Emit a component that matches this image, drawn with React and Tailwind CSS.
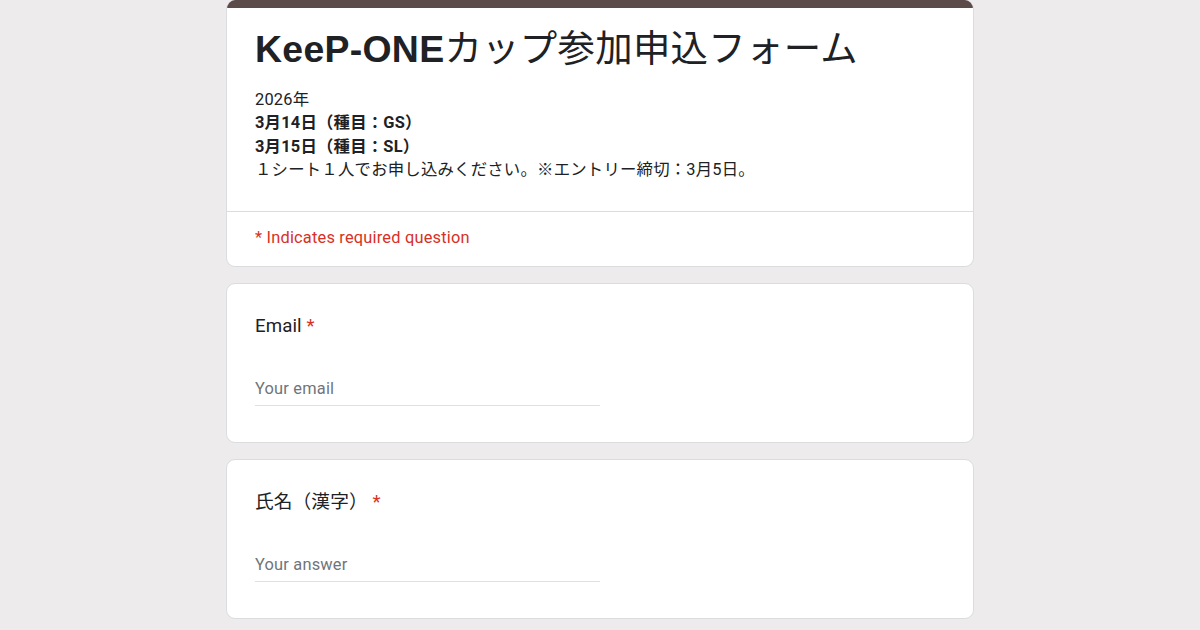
import React from 'react';

const body = "font-['Roboto','Noto_Sans_CJK_JP',sans-serif]";

function Question({ label, placeholder }) {
  return (
    <div className="bg-white border border-[#dadce0] rounded-[9px] px-[28px] pt-[30px] pb-[36px]">
      <div className="text-[18.7px] leading-[24px] tracking-[0.1px] text-[#202124]">
        {label} <span className="text-[#d93025]">*</span>
      </div>
      <div className="mt-[36px] w-[345px] h-[32px] flex items-center border-b border-[#e0e0e0] text-[16.4px] tracking-[0.2px] text-[#70757a]">
        {placeholder}
      </div>
    </div>
  );
}

export default function App() {
  return (
    <div className={`min-h-[630px] bg-[#edebeb] ${body}`}>
      <div className="w-[748px] mx-auto flex flex-col gap-[16px]">
        {/* header card */}
        <div className="bg-white border border-t-0 border-[#dadce0] rounded-b-[9px] rounded-t-[9px] overflow-hidden">
          <div className="h-[8px] bg-[#5b4b49] -mx-px"></div>
          <div className="px-[28px] pt-[17px] pb-[29px]">
            <h1 className="text-[37.4px] leading-[48px] tracking-[0.3px] text-[#202124] font-['Liberation_Sans','Noto_Sans_CJK_JP',sans-serif] whitespace-nowrap">
              <span className="font-bold">KeeP-ONE</span>
              <span className="font-normal">カップ参加申込フォーム</span>
            </h1>
            <div className="mt-[15px] text-[16.4px] leading-[23.4px] tracking-[0.2px] text-[#202124]">
              <div>2026年</div>
              <div className="font-bold">3月14日（種目：GS）</div>
              <div className="font-bold">3月15日（種目：SL）</div>
              <div>１シート１人でお申し込みください。※エントリー締切：3月5日。</div>
            </div>
          </div>
          <div className="border-t border-[#dadce0] h-[55px] px-[28px] flex items-center text-[16.4px] tracking-[0.2px] text-[#d93025]">
            * Indicates required question
          </div>
        </div>

        <Question label="Email" placeholder="Your email" />
        <Question label="氏名（漢字）" placeholder="Your answer" />
      </div>
    </div>
  );
}
